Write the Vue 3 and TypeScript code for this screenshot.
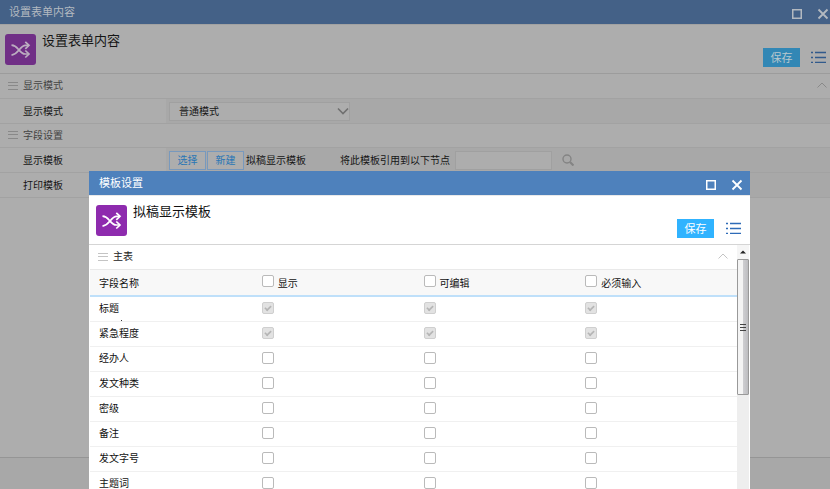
<script setup lang="ts">
import { ref, reactive } from 'vue'

interface Field {
  name: string
  locked: boolean
  show: boolean
  edit: boolean
  required: boolean
}

const make = (name: string, locked = false): Field => ({
  name,
  locked,
  show: locked,
  edit: locked,
  required: locked,
})

const fields = reactive<Field[]>([
  make('标题', true),
  make('紧急程度', true),
  make('经办人'),
  make('发文种类'),
  make('密级'),
  make('备注'),
  make('发文字号'),
  make('主题词'),
])

type Flag = 'show' | 'edit' | 'required'
const columns: { key: Flag; label: string }[] = [
  { key: 'show', label: '显示' },
  { key: 'edit', label: '可编辑' },
  { key: 'required', label: '必须输入' },
]
const allChecked = reactive<Record<Flag, boolean>>({ show: false, edit: false, required: false })

function toggleAll(key: Flag) {
  fields.forEach((f) => {
    if (!f.locked) f[key] = allChecked[key]
  })
}

const mode = ref('普通模式')
const node = ref('')
</script>

<template>
  <svg class="sprite" aria-hidden="true">
    <symbol id="shuffle" viewBox="0 0 31 31">
      <g fill="none" stroke="currentColor" stroke-width="1.7">
        <path d="M6.500 11.200c3 .2 5 1.800 6.800 4s3.700 4.800 6.700 4.800h3.500" />
        <path d="M6.500 21.200c3.200-.6 5.400-2.600 7.500-5.200s3.800-4.700 6.500-4.700h3" />
        <path d="M20.300 7.800l3.700 3.500-3.700 3.500M20.300 16.500l3.700 3.500-3.700 3.500" />
      </g>
    </symbol>
    <symbol id="square" viewBox="0 0 12 12">
      <rect x="1.750" y="1.750" width="8.500" height="8.500" fill="none" stroke="currentColor" stroke-width="1.500" />
    </symbol>
    <symbol id="cross" viewBox="0 0 12 12">
      <path d="M1.500 1.500l9 9M10.500 1.500l-9 9" fill="none" stroke="currentColor" stroke-width="1.800" />
    </symbol>
    <symbol id="list" viewBox="0 0 16 12">
      <path d="M4 1.500h11M4 6.500h11M4 11.500h11M0 1.500h2M0 6.500h2M0 11.500h2" stroke="currentColor" stroke-width="1.400" />
    </symbol>
    <symbol id="grip" viewBox="0 0 10 9">
      <path d="M0 1.500h10M0 4.500h10M0 8.500h10" stroke="currentColor" />
    </symbol>
    <symbol id="chevron" viewBox="0 0 10 6">
      <path d="M.5 5.500L5 1l4.500 4.500" fill="none" stroke="currentColor" />
    </symbol>
  </svg>

  <main class="page">
    <header class="titlebar">
      <span>设置表单内容</span>
      <div class="window-buttons">
        <button type="button" aria-label="最大化"><svg><use href="#square" /></svg></button>
        <button type="button" aria-label="关闭"><svg><use href="#cross" /></svg></button>
      </div>
    </header>
    <div class="heading">
      <svg class="logo"><use href="#shuffle" /></svg>
      <h1>设置表单内容</h1>
      <div class="actions">
        <button type="button" class="save">保存</button>
        <button type="button" class="menu" aria-label="菜单"><svg><use href="#list" /></svg></button>
      </div>
    </div>

    <h2 class="section">
      <svg class="grip"><use href="#grip" /></svg>显示模式
      <svg class="chevron"><use href="#chevron" /></svg>
    </h2>
    <div class="row">
      <label class="row-label" for="mode">显示模式</label>
      <div class="row-body">
        <div class="select-box">
          <select id="mode" v-model="mode">
            <option>普通模式</option>
          </select>
          <svg viewBox="0 0 12 8"><path d="M1 1.500l5 5 5-5" fill="none" stroke="currentColor" stroke-width="1.600" /></svg>
        </div>
      </div>
    </div>
    <h2 class="section"><svg class="grip"><use href="#grip" /></svg>字段设置</h2>
    <div class="row">
      <span class="row-label">显示模板</span>
      <div class="row-body">
        <button type="button" class="outline">选择</button>
        <button type="button" class="outline">新建</button>
        <span class="template-name">拟稿显示模板</span>
        <label class="node-label" for="node">将此模板引用到以下节点</label>
        <input id="node" v-model="node" class="node" type="text" />
        <button type="button" class="search" aria-label="搜索">
          <svg viewBox="0 0 12 12"><circle cx="5" cy="5" r="4" fill="none" stroke="currentColor" stroke-width="1.400" /><path d="M8 8l3.500 3.500" stroke="currentColor" stroke-width="2.200" /></svg>
        </button>
      </div>
    </div>
    <div class="row">
      <span class="row-label">打印模板</span>
      <div class="row-body"></div>
    </div>
    <footer class="foot"></footer>
  </main>

  <section class="dialog" role="dialog" aria-label="模板设置">
    <header class="titlebar">
      <span>模板设置</span>
      <div class="window-buttons">
        <button type="button" aria-label="最大化"><svg><use href="#square" /></svg></button>
        <button type="button" aria-label="关闭"><svg><use href="#cross" /></svg></button>
      </div>
    </header>
    <div class="heading">
      <svg class="logo"><use href="#shuffle" /></svg>
      <h1>拟稿显示模板</h1>
      <div class="actions">
        <button type="button" class="save">保存</button>
        <button type="button" class="menu" aria-label="菜单"><svg><use href="#list" /></svg></button>
      </div>
    </div>
    <div class="pane">
      <div class="content">
        <h2 class="section">
          <svg class="grip"><use href="#grip" /></svg>主表
          <svg class="chevron"><use href="#chevron" /></svg>
        </h2>
        <table>
          <thead>
            <tr>
              <th scope="col">字段名称</th>
              <th v-for="c in columns" :key="c.key" scope="col">
                <label class="check-all">
                  <input v-model="allChecked[c.key]" type="checkbox" @change="toggleAll(c.key)" />
                  <span>{{ c.label }}</span>
                </label>
              </th>
            </tr>
          </thead>
          <tbody>
            <tr v-for="f in fields" :key="f.name">
              <td>{{ f.name }}</td>
              <td v-for="c in columns" :key="c.key">
                <input v-model="f[c.key]" type="checkbox" :disabled="f.locked" :aria-label="f.name + ' ' + c.label" />
              </td>
            </tr>
          </tbody>
        </table>
        <i class="speck"></i>
      </div>
      <div class="scrollbar" aria-hidden="true">
        <div class="arrow"><svg viewBox="0 0 6 4"><path d="M0 3.500L3 .5l3 3z" fill="#222" /></svg></div>
        <div class="thumb"><svg viewBox="0 0 6 7"><path d="M0 .5h6M0 3.500h6M0 6.500h6" stroke="#444" /></svg></div>
      </div>
    </div>
  </section>
</template>

<style>
body {
  overflow: hidden;
}
</style>

<style scoped>
.page,
.dialog {
  font-family: "Noto Sans CJK SC", sans-serif;
  font-size: 10px;
  line-height: 16px;
  display: flex;
  flex-direction: column;
  color: var(--text);
  background: var(--surface);
}
.page {
  --text: #151515;
  --surface: #adadad;
  --cell: #a8a8a8;
  --bar: #446187;
  --bar-text: #b3b9c0;
  --line: #a2a2a2;
  --head-line: #9c9c9c;
  --purple: #702f86;
  --save: #3287b5;
  --save-text: #b9c8ce;
  --menu: #315a8c;
  --muted: #444;
  --grip: #898989;
  --edge: 2px;
  --left: 5px;
  --title: 9px;
  min-height: 100vh;
}
.dialog {
  --text: #111;
  --surface: #fff;
  --bar: #4e81bc;
  --bar-text: #fff;
  --line: #e9e9e9;
  --head-line: #d5d5d5;
  --purple: #8e2bae;
  --save: #30b3ff;
  --save-text: #fff;
  --menu: #2e6bb8;
  --muted: #222;
  --grip: #c4c4c4;
  --edge: 8px;
  --left: 7px;
  --title: 10px;
  position: fixed;
  top: 171px;
  right: 80px;
  bottom: 0;
  left: 89px;
  overflow: hidden;
}
button {
  font: inherit;
  color: inherit;
  border: 0;
  padding: 0;
  background: none;
  cursor: pointer;
}
svg {
  display: block;
}
.sprite {
  position: absolute;
  width: 0;
  height: 0;
}
.titlebar {
  display: flex;
  align-items: center;
  justify-content: space-between;
  box-sizing: border-box;
  flex: none;
  height: 25px;
  padding: 0 var(--edge) 2px var(--title);
  font-size: 11px;
  color: var(--bar-text);
  background: var(--bar);
  border-bottom: 1px solid var(--line);
}
.page .titlebar {
  padding-right: 1px;
}
.dialog .titlebar {
  padding-right: 7px;
}
.window-buttons {
  display: flex;
  gap: 14px;
  padding-top: 6px;
}
.window-buttons svg {
  width: 12px;
  height: 12px;
}
.heading {
  display: flex;
  flex: none;
  height: 48px;
  padding: 0 var(--edge) 0 var(--left);
  border-bottom: 1px solid var(--head-line);
}
.logo {
  width: 31px;
  height: 31px;
  margin-top: 9px;
  border-radius: 3px;
  color: #fff;
  background: var(--purple);
}
.page .logo {
  color: #bcaec0;
}
h1 {
  flex: 1;
  margin: 5px 0 0 6px;
  font-size: 13px;
  line-height: 20px;
  font-weight: 400;
}
.actions {
  display: flex;
  align-items: flex-start;
  gap: 12px;
  padding-top: 23px;
}
.save {
  width: 37px;
  height: 19px;
  padding-bottom: 2px;
  font-size: 11px;
  color: var(--save-text);
  background: var(--save);
}
.menu {
  padding-top: 3px;
  color: var(--menu);
}
.page .menu {
  margin-right: 1px;
  margin-left: -1px;
}
.menu svg {
  width: 16px;
  height: 12px;
}
.section {
  display: flex;
  align-items: center;
  box-sizing: border-box;
  flex: none;
  gap: 5px;
  height: 25px;
  margin: 0;
  padding: 0 3px 2px 8px;
  font-size: 10px;
  font-weight: 400;
  color: var(--muted);
  border-bottom: 1px solid var(--line);
}
.page .section:not(:first-of-type) {
  height: 24px;
}
.dialog .section {
  padding: 0 9px 2px 8px;
}
.grip {
  width: 10px;
  height: 9px;
  color: var(--grip);
}
.chevron {
  width: 10px;
  height: 6px;
  margin-left: auto;
  color: var(--grip);
}
.row {
  display: grid;
  grid-template-columns: 1fr 4fr;
  height: 24px;
  border-bottom: 1px solid var(--line);
}
.row-label {
  align-self: center;
  padding-left: 23px;
}
.row-body {
  display: flex;
  align-items: center;
  padding-left: 3px;
  background: var(--cell);
}
.select-box {
  display: flex;
  align-items: center;
  width: 181px;
  height: 19px;
  box-sizing: border-box;
  border: 1px solid #a0a0a0;
  background: #adadad;
}
.select-box select {
  flex: 1;
  height: 17px;
  margin-right: -14px;
  padding: 0 14px 0 9px;
  border: 0;
  font: inherit;
  color: inherit;
  background: none;
  appearance: none;
}
.select-box svg {
  width: 12px;
  height: 8px;
  color: #707070;
  pointer-events: none;
}
.outline {
  width: 37px;
  height: 19px;
  margin-right: 1px;
  padding-bottom: 1px;
  border: 1px solid #7899bd;
  font-size: 10px;
  line-height: 15px;
  color: #2876b5;
  background: #adadad;
}
.template-name {
  padding-left: 1px;
}
.node-label {
  margin-left: 34px;
}
.node {
  width: 97px;
  height: 19px;
  margin-left: 5px;
  box-sizing: border-box;
  border: 1px solid #a0a0a0;
  font: inherit;
  background: #adadad;
}
.search {
  margin-left: 10px;
  color: #848484;
}
.search svg {
  width: 12px;
  height: 12px;
}
.foot {
  height: 31px;
  margin-top: auto;
  border-top: 1px solid #959595;
  background: var(--cell);
}
.pane {
  display: flex;
  flex: 1;
  min-height: 0;
  padding: 0 1px;
}
.content {
  position: relative;
  flex: 1;
  overflow: hidden;
}
/* Small mark between the first two rows */
.speck {
  position: absolute;
  top: 75px;
  left: 31px;
  width: 1px;
  height: 1px;
  background: #333;
}
table {
  width: 100%;
  table-layout: fixed;
  border-collapse: separate;
  border-spacing: 0;
}
th,
td {
  box-sizing: border-box;
  height: 25px;
  padding: 0 10px 2px;
  text-align: left;
  font-weight: 400;
  line-height: 14px;
  vertical-align: middle;
  border-bottom: 1px solid #f0f0f0;
}
th:first-child,
td:first-child {
  padding-left: 9px;
}
th {
  height: 27px;
  padding-bottom: 0;
  background: #f8f8f8;
  border-bottom: 2px solid #bfe0fa;
}
.check-all {
  display: flex;
  align-items: flex-start;
  gap: 4px;
}
.check-all span {
  line-height: 16px;
}
input[type='checkbox'] {
  display: block;
  flex: none;
  width: 12px;
  height: 12px;
  margin: 0;
  box-sizing: border-box;
  appearance: none;
  border: 1px solid #bababa;
  border-radius: 2px;
  background: #fff;
}
input[type='checkbox']:checked {
  display: grid;
  place-items: center;
}
input[type='checkbox']:disabled {
  border-color: #cfcfcf;
  background: #e2e2e2;
}
input[type='checkbox']:checked::before {
  content: '';
  width: 6px;
  height: 3px;
  margin-bottom: 2px;
  border: solid #999;
  border-width: 0 0 2px 2px;
  box-sizing: content-box;
  transform: rotate(-45deg) scale(0.8);
}
input[type='checkbox']:disabled::before {
  border-color: #b5b5b5;
}
.scrollbar {
  display: flex;
  flex-direction: column;
  width: 12px;
  background: #eee;
}
.arrow {
  display: grid;
  place-items: center;
  height: 14px;
  background: #f5f5f5;
}
.arrow svg {
  width: 6px;
  height: 4px;
}
.thumb {
  display: grid;
  place-items: center;
  box-sizing: border-box;
  height: 136px;
  border: 1px solid #999;
  border-radius: 1px;
  background: linear-gradient(90deg, #f4f4f4 0 45%, #cfcfd2 50%, #bdbdc0);
}
.thumb svg {
  width: 6px;
  height: 7px;
}
</style>
